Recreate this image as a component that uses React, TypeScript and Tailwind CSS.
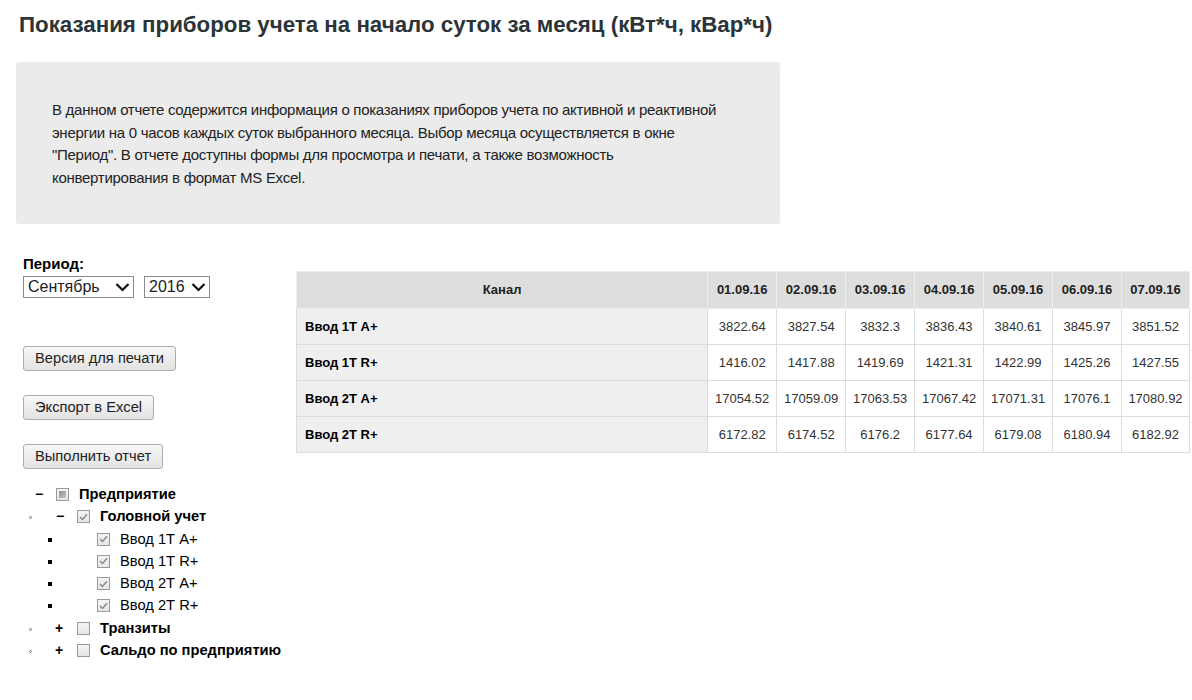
import React from "react";

const dates = ["01.09.16", "02.09.16", "03.09.16", "04.09.16", "05.09.16", "06.09.16", "07.09.16"];
const rows: { name: string; vals: string[] }[] = [
  { name: "Ввод 1Т А+", vals: ["3822.64", "3827.54", "3832.3", "3836.43", "3840.61", "3845.97", "3851.52"] },
  { name: "Ввод 1Т R+", vals: ["1416.02", "1417.88", "1419.69", "1421.31", "1422.99", "1425.26", "1427.55"] },
  { name: "Ввод 2Т А+", vals: ["17054.52", "17059.09", "17063.53", "17067.42", "17071.31", "17076.1", "17080.92"] },
  { name: "Ввод 2Т R+", vals: ["6172.82", "6174.52", "6176.2", "6177.64", "6179.08", "6180.94", "6182.92"] },
];

function Chevron() {
  return (
    <svg width="15" height="10" viewBox="0 0 15 10" className="shrink-0">
      <path d="M1.5 2 L7.5 8 L13.5 2" fill="none" stroke="#111" strokeWidth="2.2" />
    </svg>
  );
}

function Select({ label, w }: { label: string; w: string }) {
  return (
    <div className={`flex h-[22px] items-center justify-between border border-[#8a8a8a] bg-white pl-[4px] pr-[3px] text-[16px] leading-none text-[#222] ${w}`}>
      <span>{label}</span>
      <Chevron />
    </div>
  );
}

function Button({ label }: { label: string }) {
  return (
    <div className="flex h-[25px] w-fit items-center rounded-[3px] border border-[#adadad] bg-gradient-to-b from-[#f8f8f8] to-[#e2e2e2] px-[11px] text-[14.7px] text-[#222]">
      {label}
    </div>
  );
}

function Checkbox({ state }: { state: "checked" | "empty" | "partial" }) {
  return (
    <div className="flex h-[13px] w-[13px] shrink-0 items-center justify-center border border-[#9a9a9a] bg-gradient-to-b from-[#f4f4f4] to-[#e6e6e6]">
      {state === "checked" && (
        <svg width="9" height="8" viewBox="0 0 9 8">
          <path d="M1 4 L3.5 6.5 L8 1.2" fill="none" stroke="#8a8a8a" strokeWidth="1.5" />
        </svg>
      )}
      {state === "partial" && <div className="h-[7px] w-[7px] bg-gradient-to-br from-[#8e8e8e] to-[#c8c8c8]" />}
    </div>
  );
}

function TreeRow({
  dot,
  square,
  toggle,
  toggleX,
  boxX,
  state,
  label,
  bold,
}: {
  dot?: boolean;
  square?: boolean;
  toggle?: string;
  toggleX: number;
  boxX: number;
  state: "checked" | "empty" | "partial";
  label: string;
  bold?: boolean;
}) {
  return (
    <div className="relative h-[22.3px]">
      {dot && <div className="absolute left-[6px] top-[11px] h-[3px] w-[3px] rounded-full border border-[#777]" />}
      {square && <div className="absolute left-[25px] top-[10px] h-[4px] w-[4px] bg-black" />}
      {toggle && (
        <div className="absolute top-[2px] text-[14px] font-bold leading-[18px] text-black" style={{ left: toggleX }}>
          {toggle}
        </div>
      )}
      <div className="absolute top-[5px]" style={{ left: boxX }}>
        <Checkbox state={state} />
      </div>
      <div
        className={`absolute top-[2px] whitespace-nowrap text-[14.7px] leading-[18px] text-black ${bold ? "font-bold" : ""}`}
        style={{ left: boxX + 23 }}
      >
        {label}
      </div>
    </div>
  );
}

export default function App() {
  return (
    <div className="min-h-[700px] w-[1192px] bg-white font-['Liberation_Sans',Arial,sans-serif] text-[#222]">
      <h1 className="pl-[19px] pt-[12px] text-[22.3px] font-bold leading-[26px] text-[#2a3439]">
        Показания приборов учета на начало суток за месяц (кВт*ч, кВар*ч)
      </h1>
      <div className="ml-[16px] mt-[24px] h-[162px] w-[764px] rounded-[3px] bg-[#ebebeb] px-[36px] pt-[37px] text-[15px] leading-[22.7px] tracking-[-0.28px] text-[#222]">
        В данном отчете содержится информация о показаниях приборов учета по активной и реактивной
        <br />
        энергии на 0 часов каждых суток выбранного месяца. Выбор месяца осуществляется в окне
        <br />
        "Период". В отчете доступны формы для просмотра и печати, а также возможность
        <br />
        конвертирования в формат MS Excel.
      </div>

      <div className="ml-[16px] mt-[32px] flex">
        <div className="w-[280px] shrink-0 pl-[7px]">
          <div className="text-[15px] font-bold leading-[16px] text-black">Период:</div>
          <div className="mt-[4px] flex gap-[10px]">
            <Select label="Сентябрь" w="w-[111px]" />
            <Select label="2016" w="w-[66px]" />
          </div>
          <div className="mt-[48px] flex flex-col gap-[24px]">
            <Button label="Версия для печати" />
            <Button label="Экспорт в Excel" />
            <Button label="Выполнить отчет" />
          </div>
          <div className="mt-[14px]">
            <TreeRow toggle="−" toggleX={12} boxX={33} state="partial" label="Предприятие" bold />
            <TreeRow dot toggle="−" toggleX={33} boxX={54} state="checked" label="Головной учет" bold />
            {rows.map((r) => (
              <TreeRow key={r.name} square toggleX={0} boxX={74} state="checked" label={r.name} />
            ))}
            <TreeRow dot toggle="+" toggleX={32} boxX={54} state="empty" label="Транзиты" bold />
            <TreeRow dot toggle="+" toggleX={32} boxX={54} state="empty" label="Сальдо по предприятию" bold />
          </div>
        </div>

        <table className="mt-[15px] h-fit w-[894px] border-collapse text-[13px]">
          <thead>
            <tr className="h-[37px] bg-[#dedede]">
              <th className="w-[412px] border border-[#ececec] font-bold text-[#222]">Канал</th>
              {dates.map((d, i) => (
                <th key={d} className={`${i === 6 ? "w-[68px]" : "w-[69px]"} border border-[#ececec] font-bold text-[#222]`}>
                  {d}
                </th>
              ))}
            </tr>
          </thead>
          <tbody>
            {rows.map((r) => (
              <tr key={r.name} className="h-[36px]">
                <td className="border border-[#dcdcdc] bg-[#efefef] pl-[8px] text-left font-bold text-black">{r.name}</td>
                {r.vals.map((v, i) => (
                  <td key={i} className="border border-[#dcdcdc] bg-white text-center text-[#333]">
                    {v}
                  </td>
                ))}
              </tr>
            ))}
          </tbody>
        </table>
      </div>
    </div>
  );
}
